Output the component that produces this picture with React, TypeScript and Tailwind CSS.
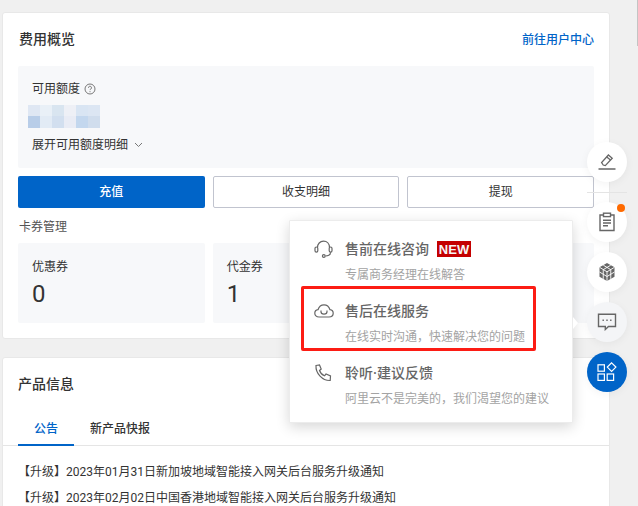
import React from "react";

function Stat({ label, value }: { label: string; value: string }) {
  return (
    <div className="h-20 rounded-[2px] bg-[#f7f8fa] pl-[14px] pt-[15px]">
      <div className="text-[12px] leading-[18px] text-[#333]">{label}</div>
      <div className="mt-[2px] text-[24px] leading-[32px] text-[#333]">{value}</div>
    </div>
  );
}

function Btn({ children, primary }: { children: React.ReactNode; primary?: boolean }) {
  return (
    <div
      className={
        primary
          ? "flex h-8 items-center justify-center rounded-[2px] bg-[#0064c8] text-[12px] font-medium text-white"
          : "flex h-8 items-center justify-center rounded-[2px] border border-[#c1c4cf] bg-white text-[12px] text-[#333]"
      }
    >
      {children}
    </div>
  );
}

function Fab({ children, bg, dot }: { children: React.ReactNode; bg: string; dot?: boolean }) {
  return (
    <div className={`relative flex h-10 w-10 items-center justify-center rounded-full ${bg} shadow-[0_2px_8px_rgba(0,0,0,0.05)]`}>
      {children}
      {dot && <span className="absolute right-[2px] top-[2px] h-2 w-2 rounded-full bg-[#ff6a00]" />}
    </div>
  );
}

function MenuItem({
  icon,
  title,
  sub,
  badge,
}: {
  icon: React.ReactNode;
  title: string;
  sub: string;
  badge?: boolean;
}) {
  return (
    <div className="flex h-[62px]">
      <div className="flex h-[22px] w-[55px] items-center pl-[24px]">{icon}</div>
      <div>
        <div className="flex h-[22px] items-center text-[14px] font-medium text-[#666]">
          {title}
          {badge && (
            <span className="ml-[8px] flex h-4 w-[34px] items-center justify-center bg-[#c40000] font-['Liberation_Sans',sans-serif] text-[13px] font-bold leading-none text-[#f5f5f5]">
              NEW
            </span>
          )}
        </div>
        <div className="mt-[6px] text-[12px] leading-[18px] text-[#a3a3a3]">{sub}</div>
      </div>
    </div>
  );
}

const blocks = [
  ["#dfe7f3", "#e9f0f7", "#d9e5f0", "#eef0f6", "#d9e5f3", "#dce6f3"],
  ["#b8cde8", "#e2ebf5", "#d2dfef", "#e9ecf5", "#c3d7ee", "#d0dded"],
];

export default function App() {
  return (
    <div
      className="relative h-[506px] w-[638px] overflow-hidden bg-[#f0f0f0] pl-[2px] pt-[12px] text-[12px] text-[#333]"
      style={{ fontFamily: "Roboto, 'Noto Sans CJK SC', sans-serif" }}
    >
      <div className="w-[608px]">
        {/* Cost overview */}
        <section className="h-[327px] rounded-[3px] border border-[#e8e8e8] bg-white px-[15px]">
          <header className="flex h-[53px] items-center justify-between pl-px">
            <h2 className="text-[14px] font-medium text-[#333]">费用概览</h2>
            <a className="text-[12px] font-medium text-[#0064c8]">前往用户中心</a>
          </header>
          <div className="h-[102px] rounded-[2px] bg-[#f7f8fa] pl-[10px] pt-[14px]">
            <div className="flex h-[18px] items-center pl-[4px] text-[12px] text-[#333]">
              可用额度
              <svg className="ml-[4px]" width="12" height="12" viewBox="0 0 12 12" fill="none" stroke="#777">
                <circle cx="6" cy="6" r="5" />
                <path d="M4.500 4.800a1.500 1.500 0 1 1 2.300 1.200c-.5.300-.8.600-.8 1.100" />
                <path d="M6 8.200v1" />
              </svg>
            </div>
            <div className="mt-[7px] flex flex-col">
              {blocks.map((row, i) => (
                <div key={i} className={i === 0 ? "flex h-[11px]" : "flex h-[12px]"}>
                  {row.map((c, j) => (
                    <div key={j} className="h-full w-3" style={{ background: c }} />
                  ))}
                </div>
              ))}
            </div>
            <div className="mt-[8px] flex h-[18px] items-center pl-[4px] text-[12px] text-[#333]">
              展开可用额度明细
              <svg className="ml-[6px]" width="9" height="6" viewBox="0 0 9 6" fill="none" stroke="#777">
                <path d="M1 1l3.500 3.500L8 1" />
              </svg>
            </div>
          </div>
          <div className="mt-[8px] grid grid-cols-3 gap-2">
            <Btn primary>充值</Btn>
            <Btn>收支明细</Btn>
            <Btn>提现</Btn>
          </div>
          <div className="mt-[10px] h-[18px] pl-px text-[12px] leading-[18px] text-[#555]">卡券管理</div>
          <div className="mt-[7px] grid grid-cols-3 gap-2">
            <Stat label="优惠券" value="0" />
            <Stat label="代金券" value="1" />
            <div className="h-20 rounded-[2px] bg-[#f7f8fa]" />
          </div>
        </section>

        {/* Product info */}
        <section className="mt-[18px] h-[200px] rounded-[3px] border border-[#e8e8e8] bg-white">
          <h2 className="px-[15px] pt-[16px] text-[14px] font-medium leading-[20px] text-[#333]">产品信息</h2>
          <div className="mt-[22px] flex h-[30px] border-b border-[#e5e5e5] pl-[15px]">
            <div className="h-[30px] w-14 border-b-2 border-[#0064c8] text-center text-[12px] font-medium leading-[27px] text-[#0064c8]">公告</div>
            <div className="ml-[16px] text-[12px] font-medium leading-[27px] text-[#333]">新产品快报</div>
          </div>
          <div className="pl-[15px] pt-[13px] text-[12px] leading-[26px] text-[#333]">
            <div>【升级】2023年01月31日新加坡地域智能接入网关后台服务升级通知</div>
            <div>【升级】2023年02月02日中国香港地域智能接入网关后台服务升级通知</div>
          </div>
        </section>
      </div>

      {/* Scrollbar thumb */}
      <div className="absolute right-0 top-0 h-[46px] w-[1px] bg-[#c4c4c4]" />

      {/* Floating action rail */}
      <div className="absolute left-[587px] top-[142px] flex w-10 flex-col items-center">
        <Fab bg="bg-white">
          <svg width="20" height="20" viewBox="0 0 20 20" fill="none" stroke="#666" strokeWidth="1.3">
            <path d="M6.200 13 4.600 10.600l6.800-7.600 3.800 3.200-6.900 7.400z" />
            <path d="M9.800 5l3.700 3" />
            <path d="M1.500 17h17" strokeWidth="1.500" />
          </svg>
        </Fab>
        <div className="my-[9.5px] h-px w-10 bg-[#e4e4e4]" />
        <Fab bg="bg-white" dot>
          <svg width="18" height="20" viewBox="0 0 18 20" fill="none" stroke="#666" strokeWidth="1.4">
            <path d="M5.500 3H2v15.500h14V3h-3.500" />
            <rect x="5.500" y="1.200" width="7" height="3.400" />
            <path d="M5 8.200h8M5 11h8M5 13.800h5" />
          </svg>
        </Fab>
        <div className="mt-[10px]" />
        <Fab bg="bg-white">
          <svg width="20" height="20" viewBox="0 0 20 20">
            <path d="M10 1l7.500 4.300v9.400L10 19l-7.500-4.300V5.300z" fill="#666" />
            <path
              d="M2.500 5.300 10 9.800l7.500-4.500M10 9.800V19M13.750 3.150 6.250 7.650M6.250 3.150l7.500 4.500M2.500 10 10 14.500M17.500 10 10 14.500M6.250 7.650v9.200M13.750 7.650v9.200"
              fill="none"
              stroke="#fff"
              strokeWidth="0.9"
            />
          </svg>
        </Fab>
        <div className="mt-[10px]" />
        <Fab bg="bg-[#f4f5f7]">
          <svg width="20" height="18" viewBox="0 0 20 18" fill="none" stroke="#666" strokeWidth="1.4">
            <path d="M1.500 1.200h17v12.300h-7l-3.200 3v-3H1.500z" />
            <path d="M5.500 7.200h1.400M9.300 7.200h1.400M13.100 7.200h1.400" strokeWidth="1.600" />
          </svg>
        </Fab>
        <div className="mt-[10px]" />
        <Fab bg="bg-[#0064c8]">
          <svg width="20" height="20" viewBox="0 0 20 20" fill="none" stroke="#fff" strokeWidth="1.2">
            <rect x="1" y="2.800" width="6.400" height="6.400" />
            <rect x="1" y="12" width="6.400" height="6.400" />
            <rect x="10.200" y="12" width="6.400" height="6.400" />
            <path d="M14.600 0.800l4.300 4.300-4.300 4.300-4.300-4.300z" />
          </svg>
        </Fab>
      </div>

      {/* Popover */}
      <div className="absolute left-[289px] top-[220px] h-[203px] w-[284px] rounded-[1px] border border-[#ececec] bg-white pt-[17px] shadow-[0_4px_14px_rgba(0,0,0,0.16)]">
        <MenuItem
          badge
          title="售前在线咨询"
          sub="专属商务经理在线解答"
          icon={
            <svg width="19" height="18" viewBox="0 0 19 18" fill="none" stroke="#666" strokeWidth="1.2">
              <path d="M3.500 7.500C3.500 3.800 6 1.200 9.500 1.200s6 2.600 6 6.300" />
              <rect x="1" y="7" width="2.800" height="5.200" rx="1.400" />
              <rect x="15.200" y="7" width="2.800" height="5.200" rx="1.400" />
              <path d="M16.600 12.200c0 2.300-2.300 3.600-5 3.800" />
              <circle cx="9.800" cy="16" r="1.400" />
            </svg>
          }
        />
        <MenuItem
          title="售后在线服务"
          sub="在线实时沟通，快速解决您的问题"
          icon={
            <svg width="20" height="14" viewBox="0 0 20 14" fill="none" stroke="#666" strokeWidth="1.2">
              <path d="M5 13C2.300 13 .8 11.200.8 9.300c0-1.900 1.300-3.300 3.200-3.600C5 2.600 7.300.8 10 .8s5 1.800 6 4.900c1.900.3 3.200 1.700 3.200 3.600 0 1.900-1.500 3.700-4.200 3.700z" />
              <path d="M7 6.500v1.300c0 1.500 1.300 2.400 3 2.400s3-.9 3-2.400V6.500" />
            </svg>
          }
        />
        <MenuItem
          title="聆听·建议反馈"
          sub="阿里云不是完美的，我们渴望您的建议"
          icon={
            <svg width="18" height="18" viewBox="0 0 18 18" fill="none" stroke="#666" strokeWidth="1.2">
              <path d="M2 1.500 5.500 1 7.200 5 5.500 6.500c.8 2.400 2.600 4.300 5 5.300L12 10l4.500 2-.3 4.500C8.500 16.800 1.500 9.500 2 1.500z" />
            </svg>
          }
        />
        {/* Arrow */}
        <div className="absolute left-[283px] top-[96px] h-0 w-0 border-y-[6px] border-l-[5px] border-y-transparent border-l-white" />
      </div>

      {/* Red annotation */}
      <div className="absolute left-[301px] top-[286px] h-[65px] w-[235px] rounded-[2px] border-[3px] border-[#fc1c14]" />
    </div>
  );
}
